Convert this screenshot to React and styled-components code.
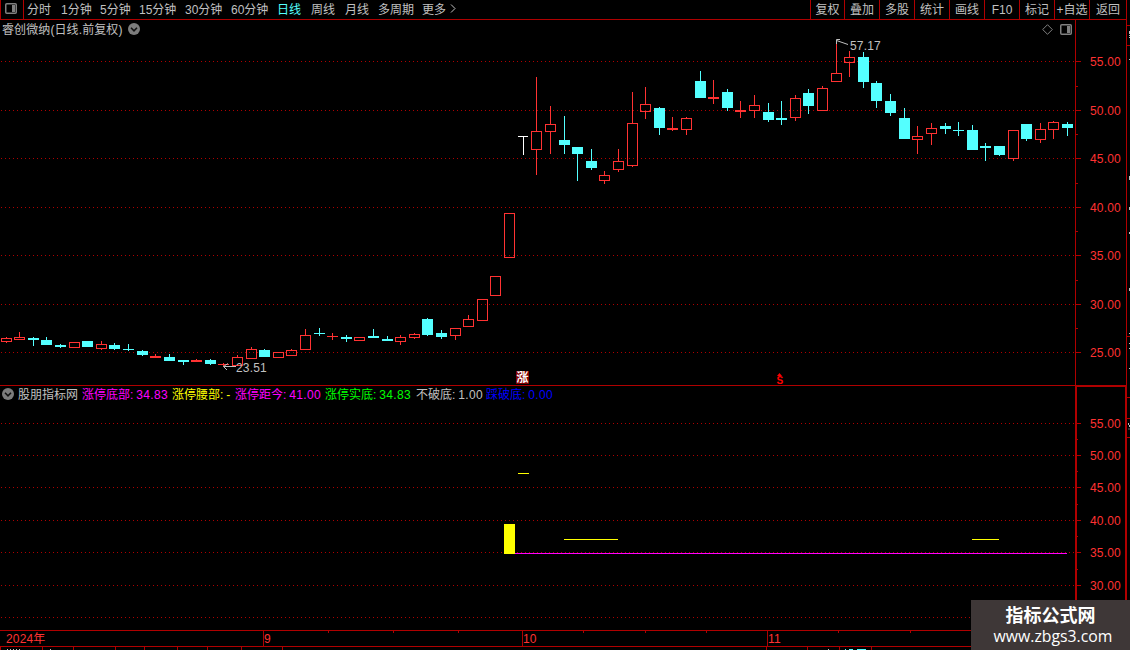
import React from "react";
import styled, { createGlobalStyle } from "styled-components";

const RED = "#ff3232";
const LINE = "#b00000";
const CYAN = "#54ffff";
const GRAY = "#c0c0c0";

const periods = [
  { name: "分时", width: 34 },
  { name: "1分钟", width: 39 },
  { name: "5分钟", width: 39 },
  { name: "15分钟", width: 46 },
  { name: "30分钟", width: 46 },
  { name: "60分钟", width: 46 },
  { name: "日线", width: 34, active: true },
  { name: "周线", width: 34 },
  { name: "月线", width: 33 },
  { name: "多周期", width: 44 },
  { name: "更多", width: 27 },
];

const tools = [
  { name: "复权", width: 34 },
  { name: "叠加", width: 35 },
  { name: "多股", width: 35 },
  { name: "统计", width: 35 },
  { name: "画线", width: 35 },
  { name: "F10", width: 35 },
  { name: "标记", width: 35 },
  { name: "+自选", width: 35 },
  { name: "返回", width: 37 },
];

const indicators = [
  { name: "股朋指标网", color: GRAY, width: 64 },
  { name: "涨停底部:", value: "34.83", color: "#ff00ff", width: 90 },
  { name: "涨停腰部:", value: "-", color: "#ffff00", width: 63 },
  { name: "涨停距今:", value: "41.00", color: "#ff00ff", width: 90 },
  { name: "涨停实底:", value: "34.83", color: "#00ff00", width: 91 },
  { name: "不破底:", value: "1.00", color: GRAY, width: 70 },
  { name: "踩破底:", value: "0.00", color: "#0000ff", width: 70 },
];

// [x, 最高, 实体上沿, 实体下沿, 最低, 类型] r = 阳线, c = 阴线, w = 一字/T字
const candles = [
  [6, 337, 338, 342, 343, "r"],
  [19, 332, 337, 340, 340, "r"],
  [33, 337, 338, 340, 346, "c"],
  [46, 337, 340, 345, 345, "c"],
  [60, 344, 345, 347, 348, "c"],
  [74, 342, 342, 348, 348, "r"],
  [87, 341, 341, 347, 347, "c"],
  [101, 341, 344, 349, 350, "r"],
  [114, 343, 345, 349, 350, "c"],
  [128, 344, 349, 350, 351, "c"],
  [142, 350, 351, 355, 356, "c"],
  [155, 354, 356, 358, 358, "r"],
  [169, 354, 357, 361, 361, "c"],
  [183, 360, 360, 362, 365, "c"],
  [196, 359, 360, 362, 362, "r"],
  [210, 359, 360, 364, 365, "c"],
  [223, 363, 364, 365, 366, "r"],
  [237, 355, 357, 366, 366, "r"],
  [251, 347, 349, 359, 359, "r"],
  [264, 349, 350, 357, 357, "c"],
  [278, 352, 352, 358, 358, "r"],
  [291, 349, 350, 356, 356, "r"],
  [305, 329, 335, 350, 350, "r"],
  [319, 328, 333, 334, 336, "c"],
  [332, 333, 336, 337, 340, "r"],
  [346, 335, 337, 339, 342, "c"],
  [359, 337, 337, 341, 341, "r"],
  [373, 329, 336, 338, 338, "c"],
  [387, 336, 339, 341, 341, "c"],
  [400, 335, 337, 342, 345, "r"],
  [414, 333, 334, 338, 339, "r"],
  [427, 318, 319, 335, 336, "c"],
  [441, 330, 333, 337, 339, "c"],
  [455, 328, 328, 336, 340, "r"],
  [468, 315, 319, 327, 327, "r"],
  [482, 299, 299, 321, 321, "r"],
  [495, 276, 276, 296, 296, "r"],
  [509, 213, 213, 258, 258, "r"],
  [523, 136, 136, 137, 155, "w"],
  [536, 77, 131, 150, 175, "r"],
  [550, 106, 124, 132, 154, "r"],
  [564, 116, 140, 145, 154, "c"],
  [577, 147, 147, 154, 181, "c"],
  [591, 149, 161, 168, 170, "c"],
  [604, 171, 175, 181, 184, "r"],
  [618, 149, 161, 170, 172, "r"],
  [632, 92, 123, 166, 167, "r"],
  [645, 87, 104, 112, 119, "r"],
  [659, 107, 108, 128, 135, "c"],
  [672, 117, 128, 130, 131, "r"],
  [686, 117, 118, 130, 135, "r"],
  [700, 71, 81, 98, 98, "c"],
  [713, 80, 97, 99, 104, "r"],
  [727, 89, 92, 108, 111, "c"],
  [740, 101, 110, 112, 118, "r"],
  [754, 95, 105, 111, 118, "r"],
  [768, 103, 112, 120, 122, "c"],
  [781, 101, 118, 120, 125, "c"],
  [795, 95, 98, 118, 121, "r"],
  [808, 89, 93, 106, 114, "c"],
  [822, 86, 88, 111, 111, "r"],
  [836, 42, 73, 82, 82, "r"],
  [849, 51, 57, 63, 77, "r"],
  [863, 52, 57, 82, 88, "c"],
  [876, 81, 83, 101, 108, "c"],
  [890, 94, 101, 113, 116, "c"],
  [904, 108, 118, 139, 139, "c"],
  [917, 126, 136, 140, 154, "r"],
  [931, 123, 128, 134, 145, "r"],
  [945, 123, 126, 129, 134, "c"],
  [958, 122, 130, 131, 136, "c"],
  [972, 125, 130, 150, 150, "c"],
  [985, 143, 146, 148, 161, "c"],
  [999, 146, 146, 155, 156, "c"],
  [1013, 130, 130, 159, 161, "r"],
  [1026, 124, 124, 139, 141, "c"],
  [1040, 123, 129, 140, 143, "r"],
  [1053, 121, 122, 130, 139, "r"],
  [1067, 122, 124, 128, 136, "c"],
];

const mainScale = [
  [61, "55.00"],
  [110, "50.00"],
  [158, "45.00"],
  [207, "40.00"],
  [255, "35.00"],
  [304, "30.00"],
  [352, "25.00"],
];
const mainMinor = [86, 134, 183, 231, 280, 328];

const subScale = [
  [423, "55.00"],
  [455, "50.00"],
  [487, "45.00"],
  [520, "40.00"],
  [552, "35.00"],
  [585, "30.00"],
  [617, ""],
];
const subMinor = [439, 471, 504, 536, 569];

const months = [
  { name: "2024年", width: 263 },
  { name: "9", width: 259 },
  { name: "10", width: 245 },
  { name: "11", width: 360 },
];
const weekTicks = [328, 393, 458, 583, 645, 706, 838, 910];
const footTicks = [0, 42, 73, 115, 144, 177, 207, 241, 282, 766, 807, 839, 871];

function PanelIcon() {
  return (
    <svg width="12" height="11" viewBox="0 0 12 11">
      <rect x="0.75" y="0.75" width="10.5" height="9.5" rx="1" fill="none" stroke="#808080" strokeWidth="1.5" />
      <rect x="7" y="2" width="3" height="7" fill="#808080" />
    </svg>
  );
}

function DropIcon() {
  return (
    <svg width="12" height="12" viewBox="0 0 12 12">
      <circle cx="6" cy="6" r="6" fill="#7c7c7c" />
      <path d="M3 4.8 6 7.8 9 4.8" fill="none" stroke="#111" strokeWidth="1.6" />
    </svg>
  );
}

function Grid({ scale }) {
  return scale.map(([y]) => (
    <line key={y} x1="1" x2="1075" y1={y + 0.5} y2={y + 0.5} stroke={LINE} strokeDasharray="1 3" />
  ));
}

function Candle({ data }) {
  const [x, high, top, bottom, low, type] = data;
  const color = type === "r" ? RED : type === "c" ? CYAN : "#fff";
  const hollow = type === "r" && bottom - top > 2;
  const left = x - 5;

  return (
    <g fill={color}>
      {high < top && <rect x={x} y={high} width="1" height={top - high} />}
      {low > bottom && <rect x={x} y={bottom} width="1" height={low - bottom} />}
      {hollow ? (
        <rect
          x={left + 0.5}
          y={top + 0.5}
          width="10"
          height={bottom - top - 1}
          fill="none"
          stroke={color}
        />
      ) : (
        <rect x={left} y={top} width={type === "w" ? 10 : 11} height={bottom - top} />
      )}
    </g>
  );
}

function Scale({ scale, minor, offset, top, height, minorWidth }) {
  return (
    <ScaleSvg width="48" height={height} viewBox={`${offset} ${top} 48 ${height}`}>
      {scale.map(([y, text]) => (
        <g key={y}>
          <rect x={offset} y={y} width={1081 - offset} height="1" fill={LINE} />
          <text x="1090" y={y + 5} fill={RED}>
            {text}
          </text>
        </g>
      ))}
      {minor.map((y) => (
        <rect key={y} x={offset} y={y} width={minorWidth} height="1" fill={LINE} />
      ))}
    </ScaleSvg>
  );
}

function App() {
  return (
    <>
      <GlobalStyle />
      <Screen>
        <Terminal>
          <TopBar>
            <IconCell>
              <PanelIcon />
            </IconCell>
            <Periods>
              {periods.map((item) => (
                <Period key={item.name} $width={item.width} $active={item.active}>
                  {item.name}
                </Period>
              ))}
              <svg width="8" height="9" viewBox="0 0 8 9">
                <path d="M2 .5 6 4.5 2 8.5" fill="none" stroke={GRAY} />
              </svg>
            </Periods>
            {tools.map((item) => (
              <Tool key={item.name} $width={item.width}>
                {item.name}
              </Tool>
            ))}
          </TopBar>

          <MainPanel>
            <ChartColumn>
              <TitleRow>
                <Title>睿创微纳(日线.前复权)</Title>
                <DropIcon />
                <TitleIcons>
                  <svg width="11" height="11" viewBox="0 0 11 11">
                    <path d="M5.5.7 10.3 5.5 5.5 10.3.7 5.5Z" fill="none" stroke="#808080" />
                  </svg>
                  <PanelIcon />
                </TitleIcons>
              </TitleRow>
              <ChartSvg width="1075" height="347" viewBox="0 38 1075 347">
                <Grid scale={mainScale} />
                {candles.map((data) => (
                  <Candle key={data[0]} data={data} />
                ))}
                <g fill="none" stroke={GRAY}>
                  <path d="M236 366.5H223.5M228 363.5 223.5 366.5 227 370" />
                  <path d="M848 44.5 836.5 40.5M840 39.5H836.5V44" />
                </g>
                <text x="236" y="372" fill={GRAY}>
                  23.51
                </text>
                <text x="850" y="50" fill={GRAY}>
                  57.17
                </text>
                <rect x="516" y="371" width="13" height="13" fill="#800000" />
                <Mark x="516.5" y="382" $color="#fff">
                  涨
                </Mark>
                <Mark x="776.5" y="383.5" $color="#f00" $size={10}>
                  S
                </Mark>
                <path d="M777 376 779.5 373 782 376Z" fill="#f00" />
              </ChartSvg>
            </ChartColumn>
            <MainScale>
              <Scale scale={mainScale} minor={mainMinor} offset={1076} top={20} height={365} minorWidth={2} />
            </MainScale>
          </MainPanel>

          <SubPanel>
            <SubColumn>
              <Legend>
                <DropIcon />
                <LegendItems>
                  {indicators.map((item) => (
                    <Indicator key={item.name} $width={item.width} $color={item.color}>
                      {item.name}
                      {item.value && <Value>{item.value}</Value>}
                    </Indicator>
                  ))}
                </LegendItems>
              </Legend>
              <ChartSvg width="1075" height="228" viewBox="0 402 1075 228">
                <Grid scale={subScale} />
                <rect x="515" y="553" width="552" height="1" fill="#ff00ff" />
                <g fill="#ffff00">
                  <rect x="504" y="524" width="11" height="30" />
                  <rect x="518" y="473" width="11" height="1" />
                  <rect x="564" y="539" width="54" height="1" />
                  <rect x="972" y="539" width="27" height="1" />
                </g>
              </ChartSvg>
            </SubColumn>
            <SubScale>
              <Scale scale={subScale} minor={subMinor} offset={1077} top={387} height={241} minorWidth={1} />
            </SubScale>
          </SubPanel>

          <TimeAxis>
            {months.map((item) => (
              <Month key={item.name} $width={item.width}>
                {item.name}
              </Month>
            ))}
            <TickSvg width="1127" height="2" viewBox="0 0 1127 2">
              {weekTicks.map((x) => (
                <rect key={x} x={x} y="0" width="1" height="2" fill={LINE} />
              ))}
            </TickSvg>
          </TimeAxis>
          <FootStrip>
            <svg width="1127" height="3" viewBox="0 0 1127 3">
              {footTicks.map((x) => (
                <rect key={x} x={x} y="0" width="1" height="3" fill={LINE} />
              ))}
              <path d="M7 2.5h14M50 2.5h2M828 2.5h1" stroke={GRAY} strokeDasharray="1 2" />
              <path d="M845 2.5h1M849 2.5h4M857 2.5h9" stroke={CYAN} />
            </svg>
          </FootStrip>
        </Terminal>

        <SideStrip>
          <svg width="3" height="650" viewBox="0 0 3 650">
            {[25, 45, 336, 397, 418, 437].map((y) => (
              <rect key={y} x="0" y={y} width="3" height="1" fill={LINE} />
            ))}
            <path
              d="M2.5 31v3M2.5 35v1M2.5 37v1M2.5 59v1M2.5 176v4M2.5 207v3M2.5 232v2M2.5 288v3M2.5 333v1M2.5 343v1M2.5 348v1M2.5 368v1M1.5 423v2M2.5 425v2M1.5 429h1"
              stroke={GRAY}
            />
          </svg>
        </SideStrip>

        <Watermark>
          <WatermarkName>指标公式网</WatermarkName>
          <WatermarkUrl>www.zbgs3.com</WatermarkUrl>
        </Watermark>
      </Screen>
    </>
  );
}

const GlobalStyle = createGlobalStyle`
  body {
    margin: 0;
    background: #000;
    overflow: hidden;
  }
  svg {
    display: block;
    flex: none;
  }
`;

const Screen = styled.div`
  position: relative;
  display: flex;
  width: 1130px;
  height: 650px;
  background: #000;
  color: ${GRAY};
  font-family: "Liberation Sans", "Noto Sans CJK SC", sans-serif;
  font-size: 12px;
  line-height: 18px;
  white-space: nowrap;
`;

const Terminal = styled.div`
  display: flex;
  flex-direction: column;
  width: 1127px;
`;

const SideStrip = styled.div`
  width: 3px;
`;

const TopBar = styled.div`
  display: flex;
  box-sizing: border-box;
  height: 20px;
  border-bottom: 1px solid ${LINE};
  border-right: 1px solid ${LINE};
  line-height: 20px;
`;

const IconCell = styled.div`
  box-sizing: border-box;
  width: 24px;
  padding: 3px 0 0 4px;
  border-left: 1px solid ${LINE};
  border-right: 1px solid ${LINE};
`;

const Periods = styled.div`
  display: flex;
  flex: 1;
  align-items: flex-start;
  padding-left: 3px;

  svg {
    margin-top: 4px;
  }
`;

const Period = styled.span`
  width: ${(props) => props.$width}px;
  color: ${(props) => (props.$active ? CYAN : GRAY)};
`;

const Tool = styled.div`
  box-sizing: border-box;
  width: ${(props) => props.$width}px;
  border-left: 1px solid ${LINE};
  text-align: center;
`;

const MainPanel = styled.div`
  display: flex;
  height: 365px;
`;

const ChartColumn = styled.div`
  width: 1075px;
`;

const TitleRow = styled.div`
  display: flex;
  align-items: center;
  height: 18px;
  padding-left: 2px;
`;

const Title = styled.span`
  width: 126px;
  padding-top: 2px;
  line-height: 16px;
  letter-spacing: 0.1px;
`;

const TitleIcons = styled.div`
  display: flex;
  align-items: center;
  gap: 7px;
  margin-left: auto;
  padding-right: 3px;
`;

const ChartSvg = styled.svg`
  text {
    letter-spacing: 0.15px;
  }
`;

const Mark = styled.text`
  fill: ${(props) => props.$color};
  font-size: ${(props) => props.$size || 12}px;
  font-weight: bold;
`;

const MainScale = styled.div`
  box-sizing: border-box;
  width: 52px;
  border-left: 1px solid ${LINE};
  border-right: 1px solid ${LINE};
`;

const ScaleSvg = styled.svg`
  letter-spacing: 0.15px;
`;

const SubPanel = styled.div`
  display: flex;
  height: 245px;
`;

const SubColumn = styled.div`
  width: 1075px;
  border-top: 1px solid ${LINE};
`;

const SubScale = styled.div`
  box-sizing: border-box;
  width: 52px;
  border: 2px solid ${LINE};
  border-bottom: none;
`;

const Legend = styled.div`
  display: flex;
  align-items: center;
  height: 16px;
  padding-left: 2px;
`;

const LegendItems = styled.div`
  display: flex;
  padding: 2px 0 0 4px;
  line-height: 16px;
`;

const Indicator = styled.span`
  width: ${(props) => props.$width}px;
  color: ${(props) => props.$color};
`;

const Value = styled.span`
  margin-left: 3px;
  letter-spacing: 0.3px;
`;

const TimeAxis = styled.div`
  position: relative;
  display: flex;
  flex: none;
  box-sizing: border-box;
  height: 17px;
  border-top: 1px solid ${LINE};
  border-bottom: 1px solid ${LINE};
  border-right: 1px solid ${LINE};
  overflow: hidden;
  color: ${RED};
`;

const Month = styled.div`
  box-sizing: border-box;
  flex: none;
  width: ${(props) => props.$width}px;
  border-left: 1px solid ${LINE};
  line-height: 16px;
  letter-spacing: 0.15px;

  &:first-child {
    padding-left: 6px;
    border-left: none;
  }
`;

const TickSvg = styled.svg`
  position: absolute;
  top: 0;
  left: 0;
`;

const FootStrip = styled.div`
  height: 3px;
`;

const Watermark = styled.div`
  position: absolute;
  right: 0;
  bottom: 0;
  display: flex;
  flex-direction: column;
  align-items: center;
  box-sizing: border-box;
  width: 159px;
  height: 50px;
  padding-top: 3px;
  background: #3e3737;
  color: #fff;
`;

const WatermarkName = styled.div`
  font-family: "Noto Sans CJK SC", sans-serif;
  font-size: 18px;
  font-weight: bold;
  line-height: 22px;
`;

const WatermarkUrl = styled.div`
  padding-left: 5px;
  font-family: "Open Sans", "Noto Sans", sans-serif;
  font-size: 15.8px;
  line-height: 22px;
`;

export default App;
